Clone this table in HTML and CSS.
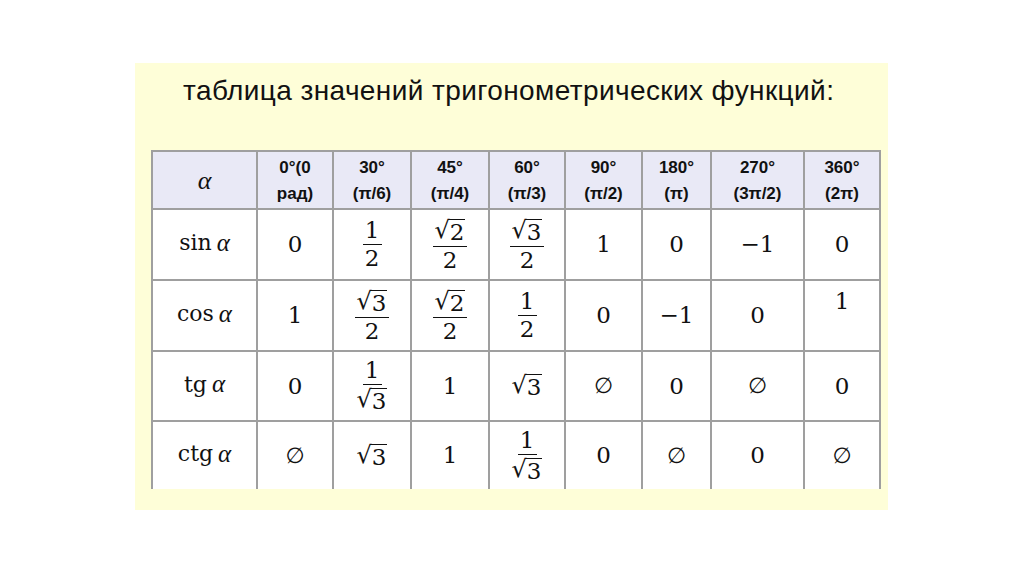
FILE: index.html
```html
<!DOCTYPE html>
<html lang="ru">
<head>
<meta charset="utf-8">
<title>Таблица значений тригонометрических функций</title>
<link rel="stylesheet" href="styles.css">
</head>
<body>
<div class="panel">
  <h1 class="title">таблица значений тригонометрических функций:</h1>
  <div class="grid">
    <div class="cell head"><span class="alpha">α</span></div>
    <div class="cell head">0°(0<br>рад)</div>
    <div class="cell head">30°<br>(π/6)</div>
    <div class="cell head">45°<br>(π/4)</div>
    <div class="cell head">60°<br>(π/3)</div>
    <div class="cell head">90°<br>(π/2)</div>
    <div class="cell head">180°<br>(π)</div>
    <div class="cell head">270°<br>(3π/2)</div>
    <div class="cell head">360°<br>(2π)</div>

    <div class="cell lbl">sin<span class="sp"></span><span class="alpha">α</span></div>
    <div class="cell m">0</div>
    <div class="cell m"><span class="frac"><span class="num">1</span><span class="den">2</span></span></div>
    <div class="cell m"><span class="frac"><span class="num"><span class="sqrt"><span class="rs">√</span><span class="rad">2</span></span></span><span class="den">2</span></span></div>
    <div class="cell m"><span class="frac"><span class="num"><span class="sqrt"><span class="rs">√</span><span class="rad">3</span></span></span><span class="den">2</span></span></div>
    <div class="cell m">1</div>
    <div class="cell m">0</div>
    <div class="cell m">−1</div>
    <div class="cell m">0</div>

    <div class="cell lbl">cos<span class="sp"></span><span class="alpha">α</span></div>
    <div class="cell m">1</div>
    <div class="cell m"><span class="frac"><span class="num"><span class="sqrt"><span class="rs">√</span><span class="rad">3</span></span></span><span class="den">2</span></span></div>
    <div class="cell m"><span class="frac"><span class="num"><span class="sqrt"><span class="rs">√</span><span class="rad">2</span></span></span><span class="den">2</span></span></div>
    <div class="cell m"><span class="frac"><span class="num">1</span><span class="den">2</span></span></div>
    <div class="cell m">0</div>
    <div class="cell m">−1</div>
    <div class="cell m">0</div>
    <div class="cell m top">1</div>

    <div class="cell lbl">tg<span class="sp"></span><span class="alpha">α</span></div>
    <div class="cell m">0</div>
    <div class="cell m"><span class="frac"><span class="num">1</span><span class="den"><span class="sqrt"><span class="rs">√</span><span class="rad">3</span></span></span></span></div>
    <div class="cell m">1</div>
    <div class="cell m"><span class="sqrt"><span class="rs">√</span><span class="rad">3</span></span></div>
    <div class="cell m empty">∅</div>
    <div class="cell m">0</div>
    <div class="cell m empty">∅</div>
    <div class="cell m">0</div>

    <div class="cell lbl last">ctg<span class="sp"></span><span class="alpha">α</span></div>
    <div class="cell m last empty">∅</div>
    <div class="cell m last"><span class="sqrt"><span class="rs">√</span><span class="rad">3</span></span></div>
    <div class="cell m last">1</div>
    <div class="cell m last"><span class="frac"><span class="num">1</span><span class="den"><span class="sqrt"><span class="rs">√</span><span class="rad">3</span></span></span></span></div>
    <div class="cell m last">0</div>
    <div class="cell m last empty">∅</div>
    <div class="cell m last">0</div>
    <div class="cell m last empty">∅</div>
  </div>
</div>
</body>
</html>
```

FILE: styles.css
```css
html, body {
  margin: 0;
  padding: 0;
  background: #ffffff;
}
body {
  width: 1024px;
  height: 574px;
  overflow: hidden;
  padding: 63px 0 0 135px;
  box-sizing: border-box;
}
.panel {
  width: 753px;
  height: 447px;
  background: #fefed8;
  box-sizing: border-box;
  padding: 0 0 0 16px;
  display: flex;
  flex-direction: column;
}
.title {
  margin: 0;
  padding: 13px 0 0 32px;
  height: 87px;
  box-sizing: border-box;
  font-family: "Liberation Sans", Arial, sans-serif;
  font-weight: normal;
  font-size: 28px;
  line-height: 30px;
  letter-spacing: 0.4px;
  word-spacing: 0;
  white-space: nowrap;
  color: #111;
}
.grid {
  display: grid;
  grid-template-columns: 105px 76px 78px 78px 76px 77px 69px 93px 76px;
  grid-template-rows: 58px 71px 71px 70px 67px;
  width: max-content;
  border-top: 2px solid #9f9f9f;
  border-left: 2px solid #9f9f9f;
  background: #ffffff;
}
.cell {
  border-right: 2px solid #9f9f9f;
  border-bottom: 2px solid #9f9f9f;
  box-sizing: border-box;
  display: flex;
  align-items: center;
  justify-content: center;
  text-align: center;
  color: #111;
}
.cell.last {
  border-bottom: none;
}
.head {
  background: #e9e9f6;
  font-family: "Liberation Sans", Arial, sans-serif;
  font-weight: bold;
  font-size: 17px;
  line-height: 26px;
  padding-top: 1px;
}
.alpha {
  font-family: "Liberation Serif", "DejaVu Serif", serif;
  font-style: italic;
  font-weight: normal;
  font-size: 26px;
}
.lbl {
  font-family: "DejaVu Serif", serif;
  font-size: 22px;
  padding-bottom: 4px;
}
.lbl .alpha {
  font-size: 25px;
}
.sp {
  display: inline-block;
  width: 5px;
}
.m {
  font-family: "DejaVu Serif", serif;
  font-size: 23px;
  line-height: 1;
}
.m.top {
  align-items: flex-start;
  padding-top: 9px;
}
.empty {
  font-family: "DejaVu Sans", sans-serif;
  font-size: 22px;
}
.frac {
  display: inline-flex;
  flex-direction: column;
  align-items: center;
}
.num {
  display: block;
  border-bottom: 1.5px solid #111;
  padding: 0 2px 2px;
  min-width: 15px;
}
.den {
  display: block;
  padding-top: 2px;
}
.sqrt {
  display: inline-flex;
  align-items: flex-start;
}
.rs {
  display: inline-block;
  font-size: 24px;
  line-height: 1;
  margin-right: -1px;
}
.rad {
  display: inline-block;
  border-top: 1.5px solid #111;
  padding: 1px 1px 0 1px;
  margin-top: 1px;
}
```
